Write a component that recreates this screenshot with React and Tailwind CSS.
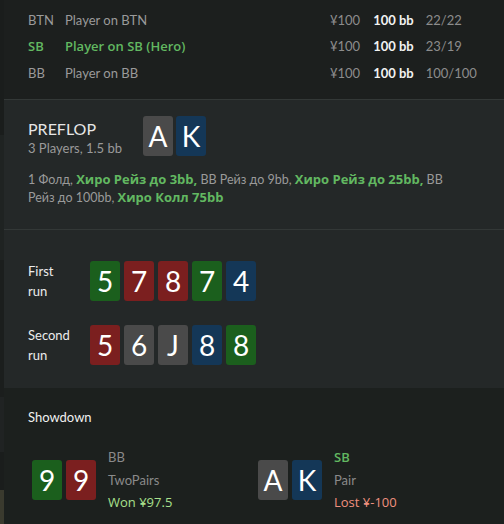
import React from 'react'

const font = { fontFamily: '"Lato", "Liberation Sans", sans-serif' }

const suitColor = {
  g: 'bg-[#1b5f1d]',
  r: 'bg-[#7b1f1f]',
  b: 'bg-[#143757]',
  x: 'bg-[#4a4a4a]',
}

const Card = ({ rank, suit }) => (
  <div className={`${suitColor[suit]} w-[30px] h-[40px] rounded-[3px] flex items-center justify-center text-white text-[28px] leading-none`}>
    {rank}
  </div>
)

const players = [
  { pos: 'BTN', name: 'Player on BTN', stack: '¥100', bb: '100 bb', ratio: '22/22' },
  { pos: 'SB', name: 'Player on SB (Hero)', stack: '¥100', bb: '100 bb', ratio: '23/19', hero: true },
  { pos: 'BB', name: 'Player on BB', stack: '¥100', bb: '100 bb', ratio: '100/100' },
]

const runs = [
  { label: ['First', 'run'], cards: [['5', 'g'], ['7', 'r'], ['8', 'r'], ['7', 'g'], ['4', 'b']] },
  { label: ['Second', 'run'], cards: [['5', 'r'], ['6', 'x'], ['J', 'x'], ['8', 'b'], ['8', 'g']] },
]

const Hero = ({ children }) => (
  <span className="text-[#62b861] font-semibold font-['Open_Sans']">{children}</span>
)

const Action = ({ children }) => (
  <span className="text-[#62b861] text-[13px] leading-[14px] font-bold font-['Open_Sans']">{children}</span>
)

export default function App() {
  return (
    <div style={font} className="w-[504px] h-[524px] flex bg-[#1c1f1e] overflow-hidden">
      {/* backdrop strip */}
      <div className="w-[4px] flex flex-col shrink-0">
        <div className="h-[135px] bg-[#1a1d1c]"></div>
        <div className="h-[125px] bg-[#1f2322]"></div>
        <div className="h-[137px] bg-[#1b1e1d]"></div>
        <div className="h-[55px] bg-[#202323]"></div>
        <div className="h-[38px] bg-[#1a1d1c]"></div>
        <div className="flex-1 bg-[#3a3a2e]"></div>
      </div>
      <div className="flex-1 flex flex-col">
        {/* players */}
        <div className="bg-[#1c1f1e] pt-[7px] pb-[12px] pl-[24px] border-b border-[#333837]">
          {players.map(p => (
            <div key={p.pos} className="h-[26.5px] flex items-center text-[13px]">
              <span className={`w-[37px] ${p.hero ? 'text-[#62b861] font-semibold font-[\'Open_Sans\']' : 'text-[#9a9a9a]'}`}>{p.pos}</span>
              <span className="w-[265px]">
                {p.hero ? <Hero>{p.name}</Hero> : <span className="text-[#9a9a9a]">{p.name}</span>}
              </span>
              <span className="text-[#8c8c8c]">{p.stack}</span>
              <span className="ml-[13px] text-[#f2f2f2] font-bold">{p.bb}</span>
              <span className="ml-[12px] text-[#8c8c8c]">{p.ratio}</span>
            </div>
          ))}
        </div>

        {/* preflop */}
        <div className="bg-[#242828] pl-[24px] pt-[16px] pb-[21px] border-b border-[#333837]">
          <div className="flex items-start">
            <div className="w-[115px] pt-[3px]">
              <div className="text-[16px] leading-[20px] text-[#e6e6e6]">PREFLOP</div>
              <div className="text-[13px] leading-[18px] text-[#9a9a9a] whitespace-nowrap">3 Players, 1.5 bb</div>
            </div>
            <div className="flex gap-[3px]">
              <Card rank="A" suit="x" />
              <Card rank="K" suit="b" />
            </div>
          </div>
          <p className="mt-[14px] text-[12.5px] leading-[18.5px] text-[#9a9a9a] pr-[45px]">
            1 Фолд, <Action>Хиро Рейз до 3bb,</Action> BB Рейз до 9bb, <Action>Хиро Рейз до 25bb,</Action> BB Рейз до 100bb, <Action>Хиро Колл 75bb</Action>
          </p>
        </div>

        {/* runs */}
        <div className="bg-[#242828] pl-[24px] pt-[31px] pb-[23px] flex flex-col gap-[24px]">
          {runs.map(r => (
            <div key={r.label[0]} className="flex items-center">
              <div className="w-[62px] text-[13px] leading-[20px] text-[#ececec]">
                <div>{r.label[0]}</div>
                <div>{r.label[1]}</div>
              </div>
              <div className="flex gap-[4px]">
                {r.cards.map((c, i) => <Card key={i} rank={c[0]} suit={c[1]} />)}
              </div>
            </div>
          ))}
        </div>

        {/* showdown */}
        <div className="flex-1 bg-[#1c201e] pl-[24px] pt-[20px]">
          <div className="text-[13px] text-[#f0f0f0]">Showdown</div>
          <div className="flex mt-[15px] pl-[4px]">
            <div className="w-[226px] flex items-center">
              <div className="flex gap-[4px] mt-[4px]">
                <Card rank="9" suit="g" />
                <Card rank="9" suit="r" />
              </div>
              <div className="ml-[12px] mt-[4px] text-[13px] leading-[22.5px]">
                <div className="text-[#8a8a8a]">BB</div>
                <div className="text-[#8a8a8a]">TwoPairs</div>
                <div className="text-[#a9e08d] font-['Open_Sans']">Won ¥97.5</div>
              </div>
            </div>
            <div className="flex items-center">
              <div className="flex gap-[4px] mt-[4px]">
                <Card rank="A" suit="x" />
                <Card rank="K" suit="b" />
              </div>
              <div className="ml-[12px] mt-[4px] text-[13px] leading-[22.5px]">
                <div className="text-[#62b861] font-semibold font-['Open_Sans']">SB</div>
                <div className="text-[#8a8a8a]">Pair</div>
                <div className="text-[#f0907e] font-['Open_Sans']">Lost ¥-100</div>
              </div>
            </div>
          </div>
        </div>
      </div>
    </div>
  )
}
